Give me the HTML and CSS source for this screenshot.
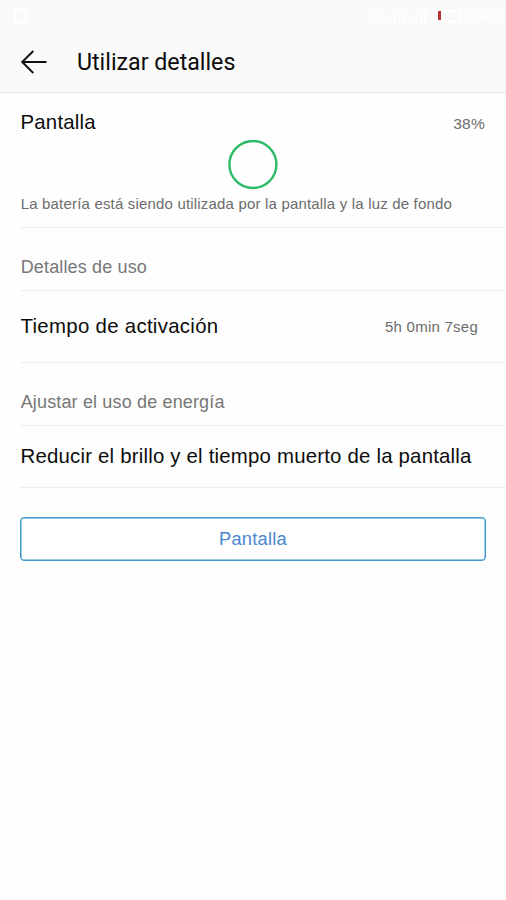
FILE: index.html
```html
<!DOCTYPE html>
<html lang="es">
<head>
<meta charset="utf-8">
<title>Utilizar detalles</title>
<link rel="stylesheet" href="styles.css">
</head>
<body>
<header class="top">
  <div class="status">
    <svg class="notice" width="14" height="16" viewBox="0 0 14 16"><rect x="1.5" y="1.5" width="11" height="13"/></svg>
    <svg class="signals" width="94" height="16" viewBox="0 0 94 16">
      <path class="line" d="M1 6q7-6 14 0M3.5 9q4.500-4 9 0M6 12q2-2 4 0"/>
      <path class="line" d="M23 14v-3M27 14V9M31 14V6M35 14V3M45 14v-3M49 14V9M53 14V6M57 14V3"/>
      <rect class="line" x="74.500" y="3" width="18" height="11"/>
      <rect class="low" x="70" y="3" width="3" height="9"/>
    </svg>
    <span class="clock">2:45</span>
  </div>
  <div class="bar">
    <svg class="back" width="28" height="26" viewBox="0 0 28 26"><path d="M13.300 2 2.200 13 13.300 24M2.200 13H26.500"/></svg>
    <h1 class="title">Utilizar detalles</h1>
  </div>
</header>
<main class="list">
  <section class="usage">
    <div class="usage-head"><span class="item name">Pantalla</span><span class="value">38%</span></div>
    <svg class="ring" width="50" height="50" viewBox="0 0 50 50"><circle cx="24.900" cy="24.500" r="23.500"/></svg>
    <p class="note">La batería está siendo utilizada por la pantalla y la luz de fondo</p>
  </section>
  <h2 class="group details">Detalles de uso</h2>
  <div class="row time"><span class="item active">Tiempo de activación</span><span class="value duration">5h 0min 7seg</span></div>
  <h2 class="group adjust">Ajustar el uso de energía</h2>
  <div class="row tip"><span class="item reduce">Reducir el brillo y el tiempo muerto de la pantalla</span></div>
  <button class="action">Pantalla</button>
</main>
</body>
</html>
```
FILE: styles.css
```css
* { box-sizing: border-box; }
body {
  margin: 0;
  min-height: 900px;
  background: #fefefe;
  color: #0c0c0c;
  font-family: "Liberation Sans", Arial, sans-serif;
}
.top {
  height: 93px;
  background: #fafafa;
  border-bottom: 1px solid #e9e9e9;
}
.status {
  height: 32px;
  display: flex;
  align-items: center;
  padding: 0 8px 0 14px;
}
.notice { fill: none; stroke: #fff; stroke-width: 1.5; }
.signals { margin-left: auto; }
.line { fill: none; stroke: #fff; stroke-width: 1.8; }
.low { fill: #b83238; }
.clock {
  margin-left: 3px;
  font: 17px/32px Roboto, sans-serif;
  color: #fff;
}
.bar {
  height: 60px;
  display: flex;
  align-items: center;
  padding-left: 19.500px;
}
.back { fill: none; stroke: #111; stroke-width: 1.9; }
.title {
  margin: 0 0 0 29.500px;
  font: 400 23.200px/30px Roboto, sans-serif;
}
.list { padding-left: 20px; }
.usage { height: 135px; border-bottom: 1px solid #ededed; }
.usage-head {
  height: 47px;
  display: flex;
  justify-content: space-between;
  padding: 17px 21px 0 0;
}
.item {
  padding-left: 0.500px;
  font-size: 20.400px;
  line-height: 24px;
  letter-spacing: 0.200px;
  white-space: nowrap;
}
.active { letter-spacing: 0.300px; }
.row .item { padding-bottom: 2px; }
.value {
  font-size: 15px;
  line-height: 28px;
  letter-spacing: 0.250px;
  color: #6c6c6c;
}
.usage .value { font-size: 15.500px; }
.ring { display: block; margin-left: 208px; }
.ring circle { fill: none; stroke: #2dbb69; stroke-width: 2.400; }
.note {
  margin: 4px 0 0;
  padding-left: 0.700px;
  font-size: 15px;
  line-height: 20px;
  letter-spacing: 0.180px;
  color: #6c6c6c;
  white-space: nowrap;
}
.group {
  height: 63px;
  margin: 0;
  padding: 15px 0 0 0.700px;
  border-bottom: 1px solid #ededed;
  font-size: 18px;
  font-weight: 400;
  line-height: 48px;
  letter-spacing: 0.150px;
  color: #777;
}
.row {
  display: flex;
  align-items: center;
  justify-content: space-between;
  border-bottom: 1px solid #ededed;
}
.time { height: 72px; padding-right: 28px; }
.tip { height: 62px; }
.action {
  display: block;
  width: 466px;
  height: 44px;
  margin: 29px 0 0;
  padding: 0;
  border: 1px solid #3b98cf;
  border-radius: 4px;
  box-shadow: inset 0 0 0 0.500px #3b98cf;
  background: #fff;
  color: #4a86d2;
  font: 18.300px/40px "Liberation Sans", Arial, sans-serif;
  letter-spacing: 0.250px;
}
```
